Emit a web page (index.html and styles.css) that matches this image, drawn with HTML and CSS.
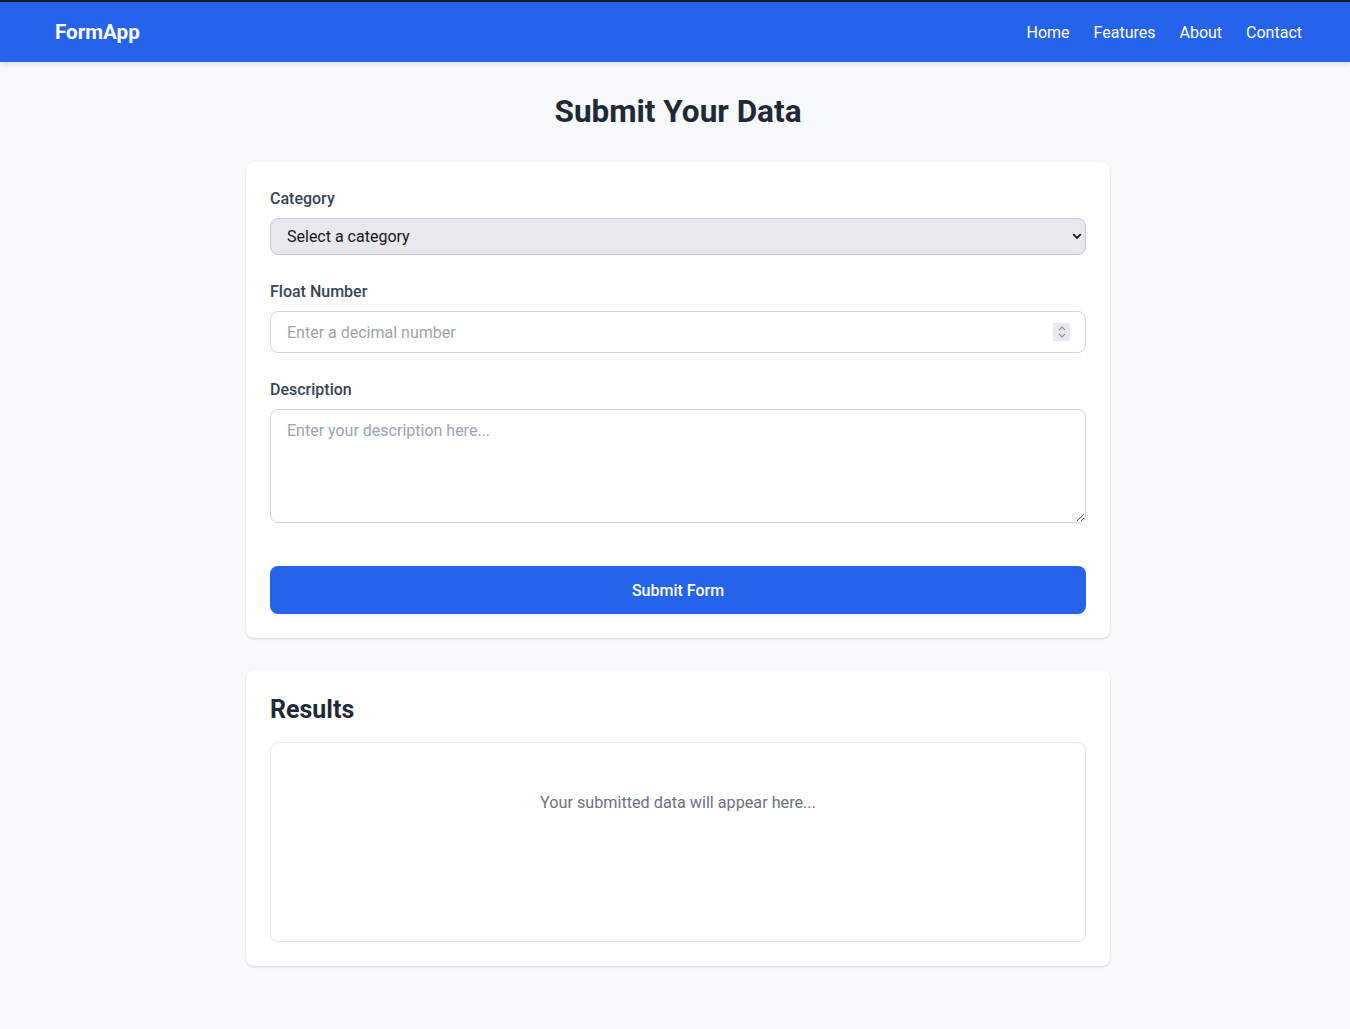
FILE: index.html
```html
<!DOCTYPE html>
<html lang="en">
<head>
<meta charset="utf-8">
<title>FormApp</title>
<link rel="stylesheet" href="styles.css">
</head>
<body>
<header class="topbar">
  <div class="topbar-inner">
    <a class="logo" href="#">FormApp</a>
    <nav class="nav">
      <a href="#">Home</a>
      <a href="#">Features</a>
      <a href="#">About</a>
      <a href="#">Contact</a>
    </nav>
  </div>
</header>
<main class="main">
  <h1 class="title">Submit Your Data</h1>
  <form class="card">
    <div class="group">
      <label class="label" for="cat">Category</label>
      <div class="select-wrap">
        <select id="cat" class="select">
          <option>Select a category</option>
        </select>
        <svg class="chev" width="10" height="7" viewBox="0 0 10 7"><path d="M1.2 1.2 L5 5 L8.8 1.2" fill="none" stroke="#1a1a1a" stroke-width="1.8"/></svg>
      </div>
    </div>
    <div class="group">
      <label class="label" for="num">Float Number</label>
      <div class="num-wrap">
        <input id="num" class="input" type="number" placeholder="Enter a decimal number">
        <span class="spin"><svg width="16" height="18" viewBox="0 0 16 18"><path d="M5 7 L8 4 L11 7" fill="none" stroke="#8c8c94" stroke-width="1.1"/><path d="M5 11 L8 14 L11 11" fill="none" stroke="#8c8c94" stroke-width="1.1"/></svg></span>
      </div>
    </div>
    <div class="group group-last">
      <label class="label" for="desc">Description</label>
      <textarea id="desc" class="textarea" placeholder="Enter your description here..."></textarea>
    </div>
    <button type="button" class="btn">Submit Form</button>
  </form>
  <section class="card results">
    <h2 class="results-title">Results</h2>
    <div class="results-box">Your submitted data will appear here...</div>
  </section>
</main>
</body>
</html>
```
FILE: styles.css
```css
* { box-sizing: border-box; }
html, body { margin: 0; padding: 0; }
body {
  background: #f8f9fb;
  font-family: Roboto, "Noto Sans", sans-serif;
  color: #1f2937;
}
.topbar {
  background: #2563eb;
  border-top: 2px solid #1c1c1c;
  height: 62px;
  box-shadow: 0 2px 6px rgba(0,0,0,0.12);
}
.topbar-inner {
  height: 60px;
  display: flex;
  align-items: center;
  justify-content: space-between;
  padding: 0 48px 0 55px;
}
.logo {
  color: #fff;
  text-decoration: none;
  font-weight: 700;
  font-size: 20.6px;
}
.nav { display: flex; gap: 24px; }
.nav a {
  color: #fff;
  text-decoration: none;
  font-size: 16px;
}
.main {
  width: 864px;
  margin: 0 0 0 calc(50% - 429px);
  padding: 32px 0 40px;
}
.title {
  margin: 0 0 32px;
  text-align: center;
  font-size: 31.5px;
  line-height: 36px;
  font-weight: 700;
  color: #1f2937;
}
.card {
  display: block;
  background: #fff;
  border-radius: 8px;
  padding: 24px;
  box-shadow: 0 1px 3px rgba(0,0,0,0.1), 0 1px 2px rgba(0,0,0,0.06);
}
.group { margin-bottom: 24px; }
.group-last { margin-bottom: 43px; }
.label {
  display: block;
  font-size: 16px;
  line-height: 25px;
  font-weight: 500;
  color: #3a4352;
  margin-bottom: 7px;
}
.select-wrap, .num-wrap { position: relative; }
.select {
  appearance: none;
  -webkit-appearance: none;
  display: block;
  width: 100%;
  height: 37px;
  padding: 0 32px 0 16px;
  font-family: inherit;
  font-size: 16px;
  color: #15151a;
  background: #e9e8ee;
  border: 1px solid #c9c8d0;
  border-radius: 8px;
}
.chev { position: absolute; right: 4px; top: 15px; pointer-events: none; }
.input {
  display: block;
  width: 100%;
  height: 42px;
  padding: 0 16px;
  font-family: inherit;
  font-size: 16px;
  border: 1px solid #d1d5db;
  border-radius: 8px;
  background: #fff;
}
.input::-webkit-inner-spin-button,
.input::-webkit-outer-spin-button { -webkit-appearance: none; margin: 0; }
.input::placeholder, .textarea::placeholder { color: #9ca3af; }
.spin {
  position: absolute;
  right: 16px;
  top: 12px;
  width: 17px;
  height: 18px;
  background: #e9e8ee;
  display: flex;
  align-items: center;
  justify-content: center;
}
.textarea {
  display: block;
  width: 100%;
  height: 114px;
  padding: 9px 16px 8px;
  font-family: inherit;
  font-size: 16px;
  line-height: 24px;
  border: 1px solid #d1d5db;
  border-radius: 8px;
  resize: vertical;
}
.btn {
  display: block;
  width: 100%;
  height: 48px;
  background: #2563eb;
  color: #fff;
  border: none;
  border-radius: 8px;
  font-family: inherit;
  font-size: 16px;
  font-weight: 500;
}
.results { margin-top: 32px; }
.results-title {
  margin: 0 0 16px;
  font-size: 25px;
  line-height: 32px;
  font-weight: 700;
  color: #1f2937;
}
.results-box {
  height: 200px;
  border: 1px solid #e5e7eb;
  border-radius: 8px;
  padding-top: 48px;
  text-align: center;
  color: #6b7280;
  font-size: 16.2px;
  line-height: 24px;
}
```
